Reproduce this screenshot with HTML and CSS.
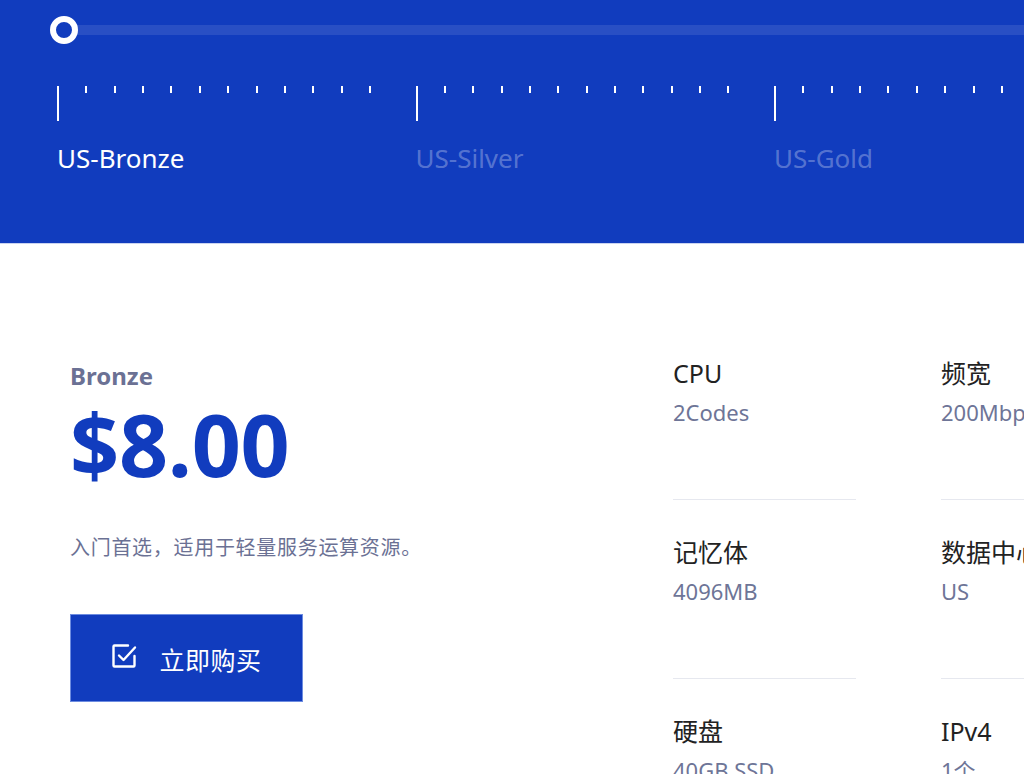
FILE: index.html
```html
<!DOCTYPE html>
<html lang="zh">
<head>
<meta charset="utf-8">
<title>US Plans</title>
<link rel="stylesheet" href="styles.css">
</head>
<body>
<div class="page">
  <section class="hero">
    <div class="hero-inner">
      <div class="slider">
        <div class="track"></div>
        <div class="knob"></div>
      </div>
      <div class="scale">
        <div class="segment">
          <div class="ticks">
            <span class="major"></span>
            <span class="minor"></span><span class="minor"></span><span class="minor"></span><span class="minor"></span>
            <span class="minor"></span><span class="minor"></span><span class="minor"></span><span class="minor"></span>
            <span class="minor"></span><span class="minor"></span><span class="minor"></span>
          </div>
          <div class="tier active">US-Bronze</div>
        </div>
        <div class="segment">
          <div class="ticks">
            <span class="major"></span>
            <span class="minor"></span><span class="minor"></span><span class="minor"></span><span class="minor"></span>
            <span class="minor"></span><span class="minor"></span><span class="minor"></span><span class="minor"></span>
            <span class="minor"></span><span class="minor"></span><span class="minor"></span>
          </div>
          <div class="tier">US-Silver</div>
        </div>
        <div class="segment">
          <div class="ticks">
            <span class="major"></span>
            <span class="minor"></span><span class="minor"></span><span class="minor"></span><span class="minor"></span>
            <span class="minor"></span><span class="minor"></span><span class="minor"></span><span class="minor"></span>
            <span class="minor"></span><span class="minor"></span><span class="minor"></span>
          </div>
          <div class="tier">US-Gold</div>
        </div>
      </div>
    </div>
  </section>

  <section class="plan">
    <div class="summary">
      <div class="plan-name">Bronze</div>
      <div class="price">$8.00</div>
      <p class="desc">入门首选，适用于轻量服务运算资源。</p>
      <a class="buy" href="#">
        <svg class="buy-icon" viewBox="0 0 26 26" width="26" height="26" aria-hidden="true">
          <path d="M17 2.5H3.5a1 1 0 0 0-1 1v19a1 1 0 0 0 1 1h19a1 1 0 0 0 1-1V13" fill="none" stroke="#fff" stroke-width="2.4" stroke-linecap="round" stroke-linejoin="round"/>
          <path d="M8 12.5l4.5 4.5L24 4.5" fill="none" stroke="#fff" stroke-width="2.4" stroke-linecap="round" stroke-linejoin="round"/>
        </svg>
        <span>立即购买</span>
      </a>
    </div>
    <div class="specs">
      <div class="spec"><div class="spec-label">CPU</div><div class="spec-value">2Codes</div></div>
      <div class="spec"><div class="spec-label">频宽</div><div class="spec-value">200Mbps</div></div>
      <div class="spec"><div class="spec-label">记忆体</div><div class="spec-value">4096MB</div></div>
      <div class="spec"><div class="spec-label">数据中心</div><div class="spec-value">US</div></div>
      <div class="spec"><div class="spec-label">硬盘</div><div class="spec-value">40GB SSD</div></div>
      <div class="spec"><div class="spec-label">IPv4</div><div class="spec-value">1个</div></div>
    </div>
  </section>
</div>
</body>
</html>
```

FILE: styles.css
```css
html, body {
  margin: 0;
  padding: 0;
  overflow: hidden;
  background: #ffffff;
}

body {
  font-family: "Noto Sans", "Noto Sans CJK SC", sans-serif;
  color: #222222;
}

.page {
  width: 1240px;
}

/* ---------- hero ---------- */
.hero {
  background: #113cbe;
  height: 244px;
  border-bottom: 1px solid #c9d3f0;
  box-sizing: border-box;
}

.hero-inner {
  padding-left: 57px;
  padding-top: 25px;
}

.slider {
  position: relative;
  height: 10px;
}

.track {
  height: 10px;
  background: rgba(255, 255, 255, 0.1);
}

.knob {
  position: absolute;
  left: -7px;
  top: -9px;
  width: 16px;
  height: 16px;
  border: 6px solid #ffffff;
  border-radius: 50%;
  background: #113cbe;
}

.scale {
  display: flex;
  margin-top: 51px;
}

.segment {
  width: 358.5px;
  flex: none;
}

.ticks {
  display: flex;
  align-items: flex-start;
  gap: 26.36px;
  height: 35px;
}

.major {
  width: 2px;
  height: 35px;
  background: #ffffff;
}

.minor {
  width: 2px;
  height: 7px;
  background: #ffffff;
}

.tier {
  margin-top: 18px;
  font-size: 26px;
  line-height: 39px;
  color: rgba(255, 255, 255, 0.3);
}

.tier.active {
  color: #ffffff;
}

/* ---------- plan ---------- */
.plan {
  display: flex;
  padding: 77px 0 0 70px;
}

.summary {
  width: 603px;
  flex: none;
  padding-top: 37px;
}

.plan-name {
  font-size: 24px;
  line-height: 36px;
  font-weight: 700;
  color: #6b7194;
}

.price {
  margin-top: 7px;
  font-size: 86px;
  line-height: 86px;
  font-weight: 700;
  color: #113cbe;
  letter-spacing: -0.3px;
}

.desc {
  margin: 46px 0 0;
  font-size: 20px;
  line-height: 30px;
  letter-spacing: 0.7px;
  color: #6b7194;
}

.buy {
  margin-top: 51px;
  width: 233px;
  height: 88px;
  box-sizing: border-box;
  display: flex;
  align-items: center;
  justify-content: center;
  gap: 22px;
  background: #113cbe;
  border: 1px solid #6d8ce0;
  color: #ffffff;
  text-decoration: none;
  font-size: 25px;
  padding-right: 0;
}

.buy-icon {
  flex: none;
  margin-top: -4px;
}

.buy span {
  line-height: 30px;
  margin-top: 4px;
  letter-spacing: 0.5px;
}

.specs {
  display: grid;
  grid-template-columns: 183px 183px;
  column-gap: 85px;
}

.spec {
  padding: 34px 0 71px;
  border-bottom: 1px solid #e6e8ef;
}

.spec-label {
  font-size: 25px;
  line-height: 36px;
  color: #222222;
}

.spec-value {
  margin-top: 5px;
  font-size: 22px;
  line-height: 32px;
  color: #6e7597;
}
```
